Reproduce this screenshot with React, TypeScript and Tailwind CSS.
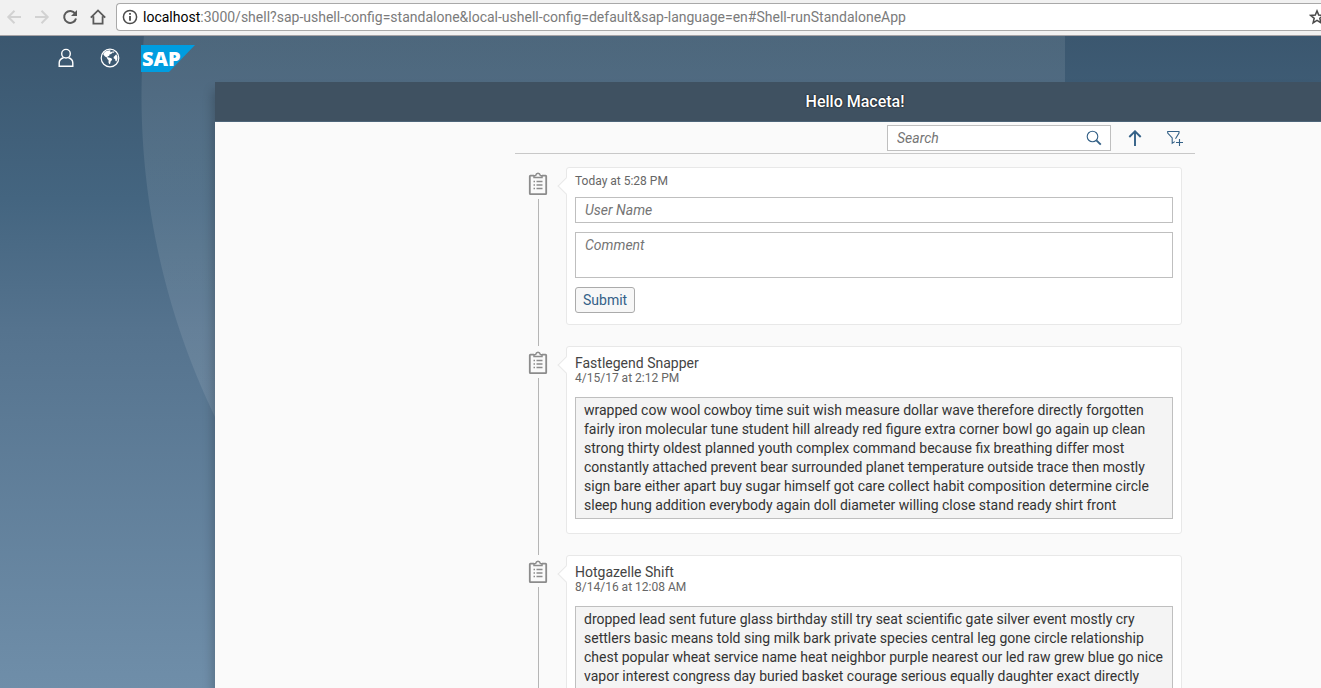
import React from "react";

type Comment = { author: string; date: string; text: string };

const comments: Comment[] = [
  {
    author: "Fastlegend Snapper",
    date: "4/15/17 at 2:12 PM",
    text: [
      "wrapped cow wool cowboy time suit wish measure dollar wave therefore directly forgotten",
      "fairly iron molecular tune student hill already red figure extra corner bowl go again up clean",
      "strong thirty oldest planned youth complex command because fix breathing differ most",
      "constantly attached prevent bear surrounded planet temperature outside trace then mostly",
      "sign bare either apart buy sugar himself got care collect habit composition determine circle",
      "sleep hung addition everybody again doll diameter willing close stand ready shirt front",
    ].join("\n"),
  },
  {
    author: "Hotgazelle Shift",
    date: "8/14/16 at 12:08 AM",
    text: [
      "dropped lead sent future glass birthday still try seat scientific gate silver event mostly cry",
      "settlers basic means told sing milk bark private species central leg gone circle relationship",
      "chest popular wheat service name heat neighbor purple nearest our led raw grew blue go nice",
      "vapor interest congress day buried basket courage serious equally daughter exact directly",
    ].join("\n"),
  },
];

function BrowserBar() {
  return (
    <div className="flex h-9 shrink-0 items-start border-b border-[#a6a3a6] bg-[#f1f1f1] pt-[3px]">
      <div className="flex h-7 shrink-0 items-center gap-3 pl-[6px] pr-[10px]">
        <button aria-label="Back" className="text-[#d2d2d2]">
          <svg className="size-4" viewBox="0 0 16 16" fill="none" stroke="currentColor" strokeWidth="2">
            <path d="M15 8H2.5M8.5 1.8L2.3 8l6.2 6.2" />
          </svg>
        </button>
        <button aria-label="Forward" className="text-[#d2d2d2]">
          <svg className="size-4" viewBox="0 0 16 16" fill="none" stroke="currentColor" strokeWidth="2">
            <path d="M1 8h12.5M7.5 1.8L13.7 8l-6.2 6.2" />
          </svg>
        </button>
        <button aria-label="Reload" className="text-[#5a5a5a]">
          <svg className="size-4" viewBox="0 0 16 16" fill="none" stroke="currentColor" strokeWidth="2">
            <path d="M13.2 4.6A6 6 0 1 0 14 9.4" />
            <path d="M15 1v6H9z" fill="currentColor" stroke="none" />
          </svg>
        </button>
        <button aria-label="Home" className="text-[#5a5a5a]">
          <svg className="size-4" viewBox="0 0 16 16" fill="none" stroke="currentColor" strokeWidth="1.8">
            <path d="M.8 8.6L8 1.4l7.2 7.2M3.4 7.2v7.4h9.2V7.2" />
          </svg>
        </button>
      </div>
      <div className="flex h-7 min-w-0 flex-1 items-center rounded-l-sm border border-r-0 border-[#a9a9a9] bg-white pl-[5px]">
        <svg className="size-4 shrink-0 text-[#4a4a4a]" viewBox="0 0 16 16" fill="none" stroke="currentColor" strokeWidth="1.5">
          <circle cx="8" cy="8" r="6.6" />
          <path d="M8 7v4.8M8 4v1.7" strokeWidth="1.8" />
        </svg>
        <span className="min-w-0 flex-1 truncate pl-[5px] font-['Roboto',sans-serif] text-[14px] text-[#7b7b7b]">
          <span className="text-black">localhost</span>
          :3000/shell?sap-ushell-config=standalone&amp;local-ushell-config=default&amp;sap-language=en#Shell-runStandaloneApp
        </span>
        <button aria-label="Bookmark" className="w-3 shrink-0 overflow-hidden text-[#4a4a4a]">
          <svg className="size-4" viewBox="0 0 16 16" fill="none" stroke="currentColor" strokeWidth="1.5">
            <path d="M8 1.9l1.7 4.2 4.6.3-3.5 2.9 1.1 4.5L8 11.4l-3.9 2.4 1.1-4.5-3.5-2.9 4.6-.3z" />
          </svg>
        </button>
      </div>
    </div>
  );
}

function ShellHeader() {
  return (
    <header className="flex h-[46px] shrink-0 items-center pb-0.5 pl-[57px] text-white">
      <button aria-label="User">
        <svg className="h-5 w-[18px]" viewBox="0 0 18 20" fill="none" stroke="currentColor" strokeWidth="1.4">
          <circle cx="9" cy="5.7" r="4.3" />
          <path d="M6.6 9.8C3.6 10.6 2.2 12.4 2.2 15v3.2h13.6V15c0-2.6-1.4-4.4-4.4-5.2" />
        </svg>
      </button>
      <button aria-label="Region" className="ml-6">
        <svg className="size-[22px]" viewBox="0 0 22 22">
          <circle cx="11" cy="11" r="8.8" fill="none" stroke="currentColor" strokeWidth="1.2" />
          <path
            fill="currentColor"
            d="M4.2 7.2L5.6 5l2.2-1.2 3.2-.6.8.8-1 .9 1 .4 1.2-.8.8.9-1.7 1.5-1.6.6-.3 1.4-1.5.4-.2.9 1.3.4 1.9.3 1.5 1.2-.6 1.5-1 .9-.3 2-1 .7-.8-1.7.1-2.2-1.3-1.3-.4-1.5-1.9-.9zM13.5 4.2l2 .6-.6 1-1.1-.2zM17.2 7.2l1.2 2.3v2.5l-1 2.5-.9-.4-.4-2-1.3-.6-.2-1.5 1.3-1.3z"
          />
        </svg>
      </button>
      <svg role="img" aria-label="SAP" className="ml-5 h-[27px] w-[54px] overflow-visible" viewBox="0 0 54 27">
        <path d="M0 0h54L28 27H0z" fill="#009de0" />
        <text x="1" y="21" fill="#fff" className="font-['Open_Sans',sans-serif] text-[20px] font-extrabold">
          SAP
        </text>
      </svg>
    </header>
  );
}

function ClipboardIcon() {
  return (
    <svg className="h-6 w-5 shrink-0 text-[#8c8c8c]" viewBox="0 0 20 24" fill="none" stroke="currentColor">
      <path d="M6 3.6H2.4a.6.6 0 0 0-.6.6v17.4c0 .4.2.6.6.6h15.2c.4 0 .6-.2.6-.6V4.2c0-.4-.2-.6-.6-.6H14" strokeWidth="1.8" />
      <path d="M6 5.6V3.8l1.7-.4C8 2 8.8 1.2 10 1.2s2 .8 2.3 2.2l1.7.4v1.8z" strokeWidth="1.5" />
      <path d="M5.5 9.5H7M5.5 13H7M5.5 16.5H7M8.5 9.5h6M8.5 13h6M8.5 16.5h6" strokeWidth="1.3" />
    </svg>
  );
}

function TimelineItem({ children, compact }: { children: React.ReactNode; compact?: boolean }) {
  return (
    <li className="flex">
      <div className="flex w-[51px] shrink-0 flex-col items-center gap-[3px] pr-[5px] pt-[5px]">
        <ClipboardIcon />
        <div className="w-px flex-1 bg-[#b5b5b5]" />
      </div>
      <div className={`relative mb-[21px] min-w-0 flex-1 rounded-[3px] border border-[#e8e8e8] bg-white px-2 ${compact ? "pb-[11px] pt-[5px]" : "pb-[14px] pt-2"}`}>
        <span className="absolute -left-[7px] top-3 size-3 rotate-45 border-b border-l border-[#e8e8e8] bg-white" />
        {children}
      </div>
    </li>
  );
}

function Toolbar() {
  return (
    <div className="flex h-8 items-center justify-end border-b border-[#c8c8c8] text-[#346187]">
      <div className="mr-1 flex h-[26px] w-56 items-center border border-[#bfbfbf] bg-white pr-2">
        <input
          type="search"
          aria-label="Search"
          placeholder="Search"
          className="h-full min-w-0 flex-1 bg-transparent px-[9px] text-[14px] text-[#333] outline-none placeholder:italic placeholder:text-[#757575]"
        />
        <button aria-label="Start search">
          <svg className="size-4" viewBox="0 0 16 16" fill="none" stroke="currentColor">
            <circle cx="6.5" cy="6.5" r="5.3" strokeWidth="1.1" />
            <path d="M10.4 10.4l4.4 4.2" strokeWidth="1.9" />
          </svg>
        </button>
      </div>
      <button aria-label="Sort" className="flex h-full w-10 items-center justify-center">
        <svg className="size-4" viewBox="0 0 16 16" fill="none" stroke="currentColor" strokeWidth="1.9">
          <path d="M8 16V1.5M2.3 7L8 1.3 13.7 7" />
        </svg>
      </button>
      <button aria-label="Add filter" className="flex h-full w-10 items-center justify-center">
        <svg className="size-4" viewBox="0 0 16 16" fill="none" stroke="currentColor" strokeWidth="1.1">
          <path d="M8.5 8.8L12 3V1.5H.7V3l4.5 5v5.2l2.6-1.6M9 12.5h7M12.5 9v7" />
        </svg>
      </button>
    </div>
  );
}

const fieldBorder = "block w-full resize-none border border-[#bfbfbf] text-[14px] outline-none";
const entryField = "mb-[9px] bg-white px-[9px] text-[#333] placeholder:italic placeholder:text-[#757575]";

export default function App() {
  return (
    <div className="flex h-screen flex-col overflow-hidden font-['Roboto',sans-serif]">
      <BrowserBar />
      <div className="flex min-h-0 flex-1 flex-col bg-[radial-gradient(circle_at_879px_60px,#ffffff18_737px,transparent_738px),linear-gradient(#3b576f,#446580_25%,#55738e_45%,#6f8ea9)] bg-no-repeat [background-size:1065px_100%,100%_100%]">
        <ShellHeader />
        <main className="ml-[215px] flex min-h-0 flex-1 flex-col bg-[#fafafa] shadow-[-2px_8px_10px_#00000038]">
          <h1 className="h-10 shrink-0 border-b border-[#4d6579] bg-[#3f5161] pl-[174px] text-center text-[16px] font-medium leading-10 text-white [text-shadow:0_0_2px_#000]">
            Hello Maceta!
          </h1>
          <div className="min-h-0 flex-1 overflow-y-auto pl-[174px] [scrollbar-width:none]">
            <div className="mx-auto max-w-[680px]">
              <Toolbar />
              <ul className="pr-[13px] pt-[13px]">
                <TimelineItem compact>
                  <form onSubmit={(e) => e.preventDefault()}>
                    <p className="mb-[7px] text-[12px] leading-[17px] text-[#666]">Today at 5:28 PM</p>
                    <input
                      aria-label="User Name"
                      placeholder="User Name"
                      className={`${fieldBorder} ${entryField} h-[26px]`}
                    />
                    <textarea
                      aria-label="Comment"
                      placeholder="Comment"
                      rows={2}
                      className={`${fieldBorder} ${entryField} py-[3px] leading-[19px]`}
                    />
                    <button
                      type="submit"
                      className="flex h-[26px] items-center rounded-[3px] border border-[#ababab] bg-[#f7f7f7] px-[7px] text-[14px] text-[#346187]"
                    >
                      Submit
                    </button>
                  </form>
                </TimelineItem>
                {comments.map((c) => (
                  <TimelineItem key={c.author}>
                    <h2 className="text-[14px] leading-4 text-[#444]">{c.author}</h2>
                    <p className="mb-[11px] text-[12px] leading-[15px] text-[#666]">{c.date}</p>
                    <textarea
                      readOnly
                      aria-label={`Comment by ${c.author}`}
                      rows={6}
                      value={c.text}
                      className={`${fieldBorder} bg-[#f4f4f4] px-2 py-[3px] leading-[19px] text-[#333]`}
                    />
                  </TimelineItem>
                ))}
              </ul>
            </div>
          </div>
        </main>
      </div>
    </div>
  );
}
